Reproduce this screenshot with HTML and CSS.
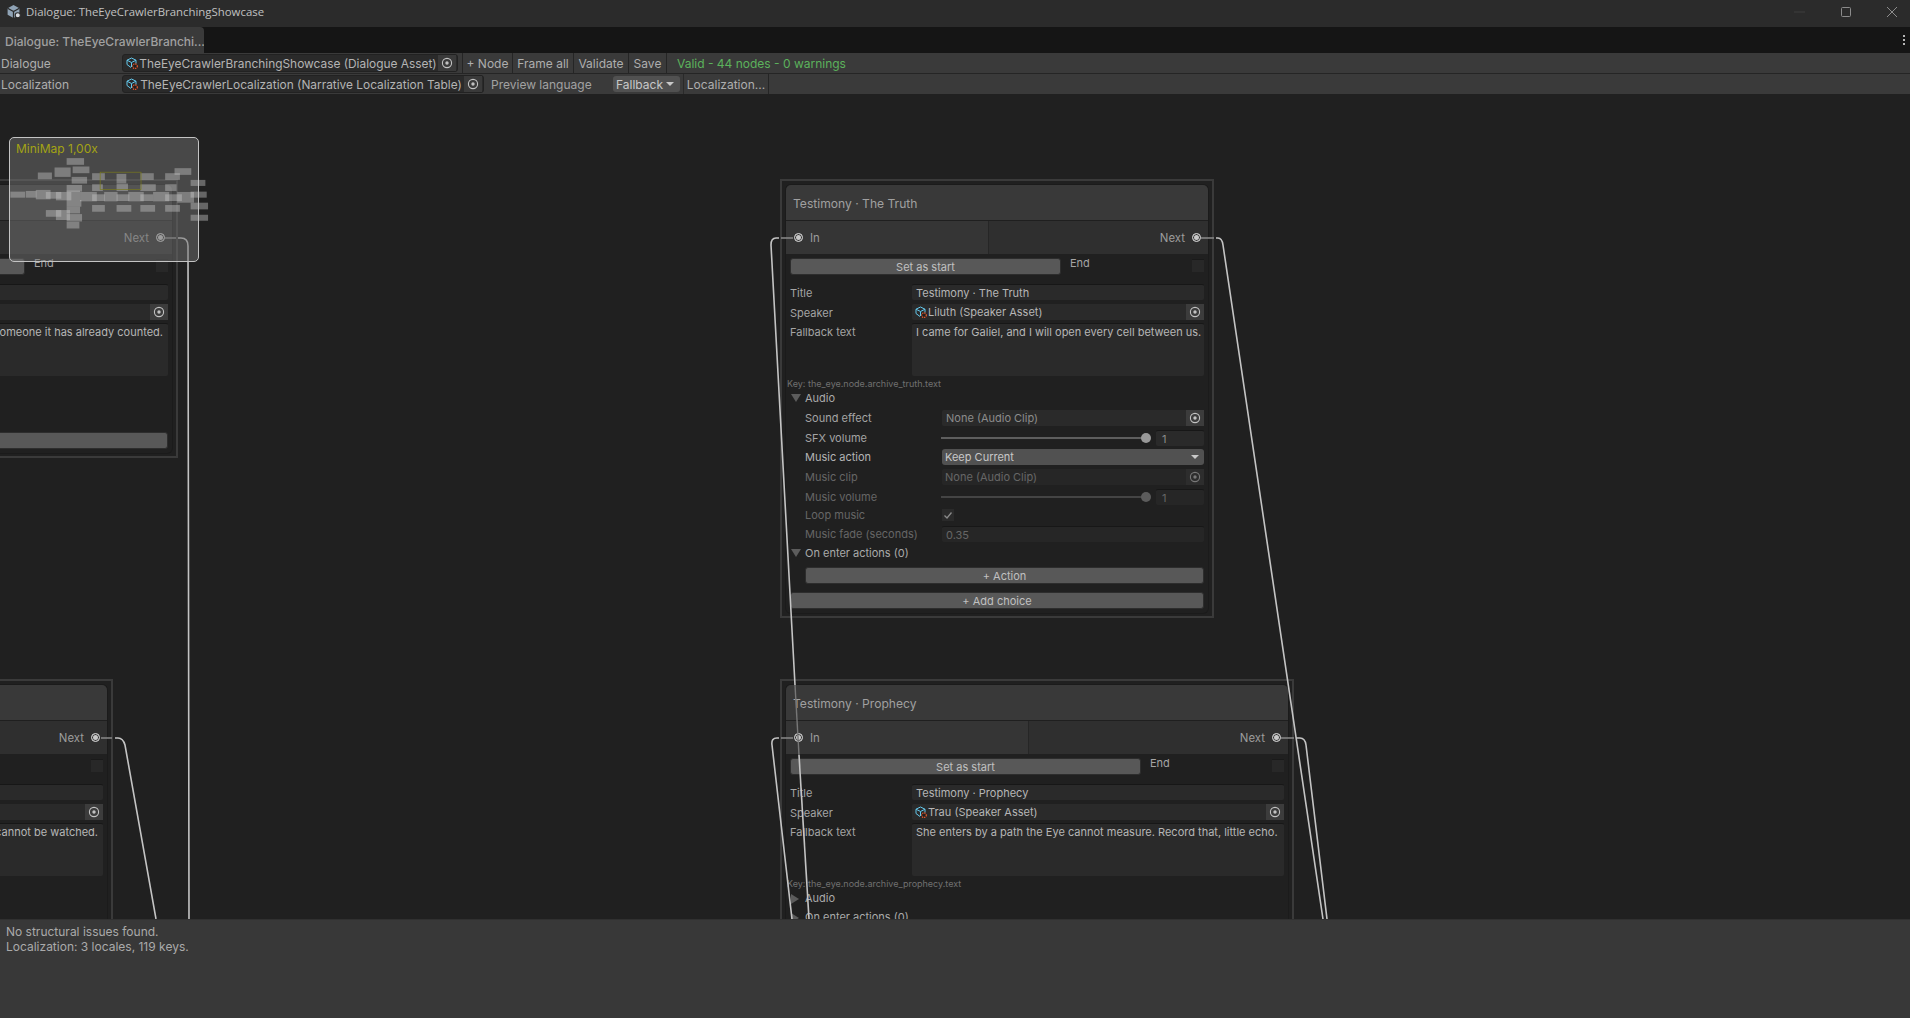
FILE: index.html
```html
<!DOCTYPE html>
<html lang="en">
<head>
    <meta charset="UTF-8">
    <title>Dialogue: TheEyeCrawlerBranchingShowcase</title>
    <link rel="stylesheet" href="styles.css">
</head>
<body>
    <svg width="0" height="0" class="defs">
        <symbol id="asset" viewBox="0 0 12 12">
            <path d="M5.5 1 L10 3.2 V6.5 M5.5 1 L1 3.2 V7.5 L5 10.5 M1 3.2 L5.5 5.5 L10 3.2 M5.5 5.5 V10" fill="none" stroke="#63c8ec" stroke-width="1"/>
            <circle cx="9" cy="9.2" r="2.3" fill="#202020" stroke="#f05a2c" stroke-width="1.2" stroke-dasharray="1.2 0.8"/>
        </symbol>
        <symbol id="target" viewBox="0 0 12 12">
            <circle cx="6" cy="6" r="4.6" fill="none" stroke="#c2c2c2" stroke-width="1.1"/>
            <circle cx="6" cy="6" r="1.7" fill="#c2c2c2"/>
        </symbol>
    </svg>

    <header class="titlebar">
        <svg class="app-icon" viewBox="0 0 14 14">
            <path d="M7 1 L12.5 4 V10 L7 13 L1.5 10 V4 Z" fill="#8fa3b5"/>
            <path d="M1.5 4 L7 7 L12.5 4 M7 7 V13" fill="none" stroke="#2b2b2b" stroke-width="1.2"/>
            <circle cx="11" cy="10.5" r="2.4" fill="#d9dde2" stroke="#2b2b2b"/>
        </svg>
        <span class="titlebar-text">Dialogue: TheEyeCrawlerBranchingShowcase</span>
        <div class="window-buttons">
            <svg class="win-btn" viewBox="0 0 12 12"><path d="M0 6 H11" stroke="#3f3f3f" fill="none"/></svg>
            <svg class="win-btn" viewBox="0 0 12 12"><rect x="1.5" y="1.5" width="9" height="9" rx="1" stroke="#8c8c8c" fill="none"/></svg>
            <svg class="win-btn" viewBox="0 0 12 12"><path d="M1 1 L11 11 M11 1 L1 11" stroke="#8c8c8c" fill="none"/></svg>
        </div>
    </header>

    <div class="tabstrip">
        <div class="tab">Dialogue: TheEyeCrawlerBranchi...</div>
        <div class="tab-menu"><i></i><i></i><i></i></div>
    </div>

    <div class="toolbar">
        <div class="tool-label">Dialogue</div>
        <div class="object-field object-dialogue">
            <svg class="asset-icon"><use href="#asset"/></svg>
            <span class="object-name">TheEyeCrawlerBranchingShowcase (Dialogue Asset)</span>
            <svg class="target-icon"><use href="#target"/></svg>
        </div>
        <button class="tool-btn btn-node">+ Node</button>
        <button class="tool-btn btn-frame">Frame all</button>
        <button class="tool-btn btn-validate">Validate</button>
        <button class="tool-btn btn-save">Save</button>
        <span class="status">Valid - 44 nodes - 0 warnings</span>
    </div>
    <div class="toolbar toolbar-second">
        <div class="tool-label">Localization</div>
        <div class="object-field object-loc">
            <svg class="asset-icon"><use href="#asset"/></svg>
            <span class="object-name">TheEyeCrawlerLocalization (Narrative Localization Table)</span>
            <svg class="target-icon"><use href="#target"/></svg>
        </div>
        <span class="preview-label">Preview language</span>
        <div class="lang-select">Fallback<i class="caret"></i></div>
        <button class="tool-btn btn-loc">Localization...</button>
    </div>

    <main class="canvas">
        <!-- upper left node, cut off by the window -->
        <section class="frame frame-upper-left">
            <div class="node">
                <div class="node-title"></div>
                <div class="ports">
                    <div class="port-in"></div>
                    <div class="port-out"><span>Next</span><i class="port"></i></div>
                </div>
                <div class="node-body">
                    <div class="start-row">
                        <button class="btn btn-start"></button>
                        <div class="end-box"><span>End</span><i class="check"></i></div>
                    </div>
                    <div class="row row-title"><label></label><div class="field"></div></div>
                    <div class="row"><label></label><div class="field field-object"><span class="grow"></span><span class="target-box"><svg class="target-icon"><use href="#target"/></svg></span></div></div>
                    <div class="row row-text"><label></label><div class="field textarea textarea-right">It will not mourn someone it has already counted.</div></div>
                    <div class="key-row"></div>
                    <div class="fold"></div>
                    <div class="fold fold-next"></div>
                    <button class="btn add-choice"></button>
                </div>
            </div>
        </section>

        <!-- Testimony - The Truth -->
        <section class="frame frame-truth">
            <div class="node">
                <div class="node-title">Testimony · The Truth</div>
                <div class="ports">
                    <div class="port-in port-in-truth"><i class="port"></i><span>In</span></div>
                    <div class="port-out"><span>Next</span><i class="port"></i></div>
                </div>
                <div class="node-body">
                    <div class="start-row">
                        <button class="btn btn-start">Set as start</button>
                        <div class="end-box"><span>End</span><i class="check"></i></div>
                    </div>
                    <div class="row row-title"><label>Title</label><div class="field">Testimony · The Truth</div></div>
                    <div class="row"><label>Speaker</label><div class="field field-object"><svg class="asset-icon"><use href="#asset"/></svg><span class="grow">Liluth (Speaker Asset)</span><span class="target-box"><svg class="target-icon"><use href="#target"/></svg></span></div></div>
                    <div class="row row-text"><label>Fallback text</label><div class="field textarea">I came for Galiel, and I will open every cell between us.</div></div>
                    <div class="key-row">Key: the_eye.node.archive_truth.text</div>
                    <div class="fold"><i class="tri-open"></i>Audio</div>
                    <div class="sub-row sub-sound"><label>Sound effect</label><div class="field field-object field-none"><span class="grow">None (Audio Clip)</span><span class="target-box"><svg class="target-icon"><use href="#target"/></svg></span></div></div>
                    <div class="sub-row"><label>SFX volume</label><div class="slider"><i class="thumb"></i></div><div class="field num field-none">1</div></div>
                    <div class="sub-row sub-action"><label class="bright">Music action</label><div class="dropdown">Keep Current<i class="caret"></i></div></div>
                    <div class="sub-row muted sub-clip"><label>Music clip</label><div class="field field-object"><span class="grow">None (Audio Clip)</span><span class="target-box"><svg class="target-icon"><use href="#target"/></svg></span></div></div>
                    <div class="sub-row muted sub-clip"><label>Music volume</label><div class="slider"><i class="thumb"></i></div><div class="field num">1</div></div>
                    <div class="sub-row muted sub-loop"><label>Loop music</label><div class="tick"><svg viewBox="0 0 12 12"><path d="M2.5 6.5 L5 9 L9.5 3.5" fill="none" stroke="#8a8a8a" stroke-width="1.3"/></svg></div></div>
                    <div class="sub-row muted sub-fade"><label>Music fade (seconds)</label><div class="field">0.35</div></div>
                    <div class="fold fold-actions"><i class="tri-open"></i>On enter actions (0)</div>
                    <button class="btn btn-action">+ Action</button>
                    <button class="btn add-choice">+ Add choice</button>
                </div>
            </div>
        </section>

        <!-- lower left node, cut off by the window -->
        <section class="frame frame-lower-left">
            <div class="node">
                <div class="node-title"></div>
                <div class="ports">
                    <div class="port-in"></div>
                    <div class="port-out"><span>Next</span><i class="port"></i></div>
                </div>
                <div class="node-body">
                    <div class="start-row">
                        <button class="btn btn-start"></button>
                        <div class="end-box"><span></span><i class="check"></i></div>
                    </div>
                    <div class="row row-title"><label></label><div class="field"></div></div>
                    <div class="row"><label></label><div class="field field-object"><span class="grow"></span><span class="target-box"><svg class="target-icon"><use href="#target"/></svg></span></div></div>
                    <div class="row row-text"><label></label><div class="field textarea textarea-right">Some rooms cannot be watched.</div></div>
                    <div class="key-row"></div>
                    <div class="fold"></div>
                    <div class="fold fold-next"></div>
                    <button class="btn add-choice"></button>
                </div>
            </div>
        </section>

        <!-- Testimony - Prophecy -->
        <section class="frame frame-prophecy">
            <div class="node">
                <div class="node-title">Testimony · Prophecy</div>
                <div class="ports">
                    <div class="port-in port-in-prophecy"><i class="port"></i><span>In</span></div>
                    <div class="port-out"><span>Next</span><i class="port"></i></div>
                </div>
                <div class="node-body">
                    <div class="start-row">
                        <button class="btn btn-start">Set as start</button>
                        <div class="end-box"><span>End</span><i class="check"></i></div>
                    </div>
                    <div class="row row-title"><label>Title</label><div class="field">Testimony · Prophecy</div></div>
                    <div class="row"><label>Speaker</label><div class="field field-object"><svg class="asset-icon"><use href="#asset"/></svg><span class="grow">Trau (Speaker Asset)</span><span class="target-box"><svg class="target-icon"><use href="#target"/></svg></span></div></div>
                    <div class="row row-text"><label>Fallback text</label><div class="field textarea">She enters by a path the Eye cannot measure. Record that, little echo.</div></div>
                    <div class="key-row">Key: the_eye.node.archive_prophecy.text</div>
                    <div class="fold"><i class="tri-closed"></i>Audio</div>
                    <div class="fold fold-next"><i class="tri-closed"></i>On enter actions (0)</div>
                </div>
            </div>
        </section>

        <svg class="wires" viewBox="0 94 1910 825">
            <g class="wire-stub">
                <path d="M165 238 H176"/>
                <path d="M101 738 H112"/>
                <path d="M793 238 H781"/>
                <path d="M793 738 H781"/>
                <path d="M1201 238 H1214"/>
                <path d="M1281 738 H1294"/>
            </g>
            <g class="wire">
                <path d="M178 238 H181 Q188 238 188 246 L189 919"/>
                <path d="M115 738 H118 Q123 738 125 745 L156 919"/>
                <path d="M779 238 H776 Q771 238 771 245 L795 685"/>
                <path d="M799 755 L809 919"/>
                <path d="M779 738 H777 Q771 738 772 745 L792 919"/>
                <path d="M1216 238 H1218 Q1222 238 1223 245 L1323 919"/>
                <path d="M1296 738 H1300 Q1305 738 1306 745 L1327 919"/>
            </g>
            <path class="wire-dim" d="M795 685 L799 755"/>
        </svg>

        <aside class="minimap">
            <span class="minimap-title">MiniMap 1,00x</span>
            <svg class="minimap-map" viewBox="28 22 567 373">
                <g class="mini-nodes">
                    <rect x="200" y="85" width="52" height="20"/><rect x="218" y="110" width="50" height="20"/>
                    <rect x="164" y="113" width="48" height="28"/><rect x="114" y="128" width="42" height="20"/>
                    <rect x="215" y="141" width="46" height="20"/><rect x="276" y="130" width="38" height="20"/>
                    <rect x="349" y="132" width="29" height="28"/><rect x="420" y="130" width="40" height="20"/>
                    <rect x="494" y="130" width="44" height="20"/><rect x="522" y="115" width="50" height="20"/>
                    <rect x="570" y="150" width="44" height="18"/><rect x="276" y="163" width="32" height="20"/>
                    <rect x="349" y="161" width="34" height="22"/><rect x="420" y="163" width="46" height="20"/>
                    <rect x="494" y="163" width="34" height="20"/><rect x="200" y="165" width="46" height="20"/>
                    <rect x="32" y="185" width="44" height="18"/><rect x="78" y="183" width="32" height="20"/>
                    <rect x="108" y="180" width="44" height="28"/><rect x="138" y="186" width="46" height="20"/>
                    <rect x="168" y="186" width="46" height="25"/><rect x="200" y="182" width="40" height="28"/>
                    <rect x="240" y="186" width="50" height="28"/><rect x="276" y="193" width="38" height="20"/>
                    <rect x="312" y="186" width="40" height="28"/><rect x="349" y="193" width="38" height="20"/>
                    <rect x="384" y="186" width="46" height="28"/><rect x="420" y="193" width="38" height="20"/>
                    <rect x="458" y="186" width="48" height="28"/><rect x="494" y="193" width="50" height="20"/>
                    <rect x="530" y="186" width="50" height="32"/><rect x="570" y="185" width="48" height="18"/>
                    <rect x="200" y="210" width="44" height="20"/><rect x="200" y="230" width="40" height="20"/>
                    <rect x="138" y="240" width="46" height="20"/><rect x="168" y="240" width="42" height="30"/>
                    <rect x="200" y="252" width="46" height="22"/><rect x="200" y="275" width="38" height="20"/>
                    <rect x="276" y="225" width="38" height="20"/><rect x="349" y="225" width="44" height="20"/>
                    <rect x="420" y="225" width="44" height="20"/><rect x="494" y="225" width="44" height="20"/>
                    <rect x="570" y="218" width="52" height="20"/><rect x="570" y="254" width="52" height="18"/>
                </g>
                <rect class="mini-view" x="300" y="127" width="122" height="52"/>
            </svg>
        </aside>
    </main>

    <footer class="console">
        <div>No structural issues found.</div>
        <div>Localization: 3 locales, 119 keys.</div>
    </footer>
</body>
</html>
```

FILE: styles.css
```css
* {
    box-sizing: border-box;
}
html, body {
    height: 100%;
}
body {
    margin: 0;
    display: flex;
    flex-direction: column;
    height: 1018px;
    overflow: hidden;
    background: #202020;
    color: #c4c4c4;
    font-family: Inter, "Liberation Sans", sans-serif;
    font-size: 12px;
}
button {
    font: inherit;
    color: inherit;
    border: 0;
    padding: 0;
    background: none;
}
.defs {
    position: absolute;
}

/* window chrome */
.titlebar {
    height: 27px;
    flex: none;
    display: flex;
    align-items: center;
    padding: 0 0 4px 6px;
    background: #2b2b2b;
}
.app-icon {
    width: 15px;
    height: 15px;
}
.titlebar-text {
    margin-left: 5px;
    font-family: "Open Sans", sans-serif;
    font-size: 11.4px;
    color: #c0c0c0;
}
.window-buttons {
    margin-left: auto;
    display: flex;
    gap: 34px;
    padding-right: 12px;
}
.win-btn {
    width: 12px;
    height: 12px;
}
.tabstrip {
    height: 26px;
    flex: none;
    display: flex;
    justify-content: space-between;
    background: #151515;
}
.tab {
    width: 204px;
    padding: 7px 0 0 5px;
    background: #3a3a3a;
    border-radius: 0 4px 0 0;
    font-weight: 500;
    color: #a0a0a0;
    white-space: nowrap;
    overflow: hidden;
}
.tab-menu {
    display: flex;
    flex-direction: column;
    gap: 2px;
    padding: 8px 5px 0 0;
}
.tab-menu i {
    width: 2px;
    height: 2px;
    background: #b5b5b5;
}

/* toolbars */
.toolbar {
    height: 21px;
    flex: none;
    display: flex;
    align-items: center;
    background: #3a3a3a;
    border-bottom: 1px solid #252525;
}
.toolbar-second {
    height: 20px;
    border-bottom: 0;
}
.tool-label {
    width: 122px;
    padding-left: 1px;
    color: #aeaeae;
}
.object-field {
    height: 18px;
    display: flex;
    align-items: center;
    justify-content: space-between;
    padding-left: 3px;
    background: #2a2a2a;
    border: 1px solid #222;
    border-radius: 3px;
}
.object-dialogue {
    width: 336px;
}
.object-loc {
    width: 362px;
}
.asset-icon {
    width: 12px;
    height: 12px;
    flex: none;
}
.object-name {
    white-space: nowrap;
    color: #b4b4b4;
    font-size: 11.9px;
}
.target-icon {
    width: 12px;
    height: 12px;
    flex: none;
}
.object-field .target-icon {
    box-sizing: content-box;
    padding: 2px 3px;
    background: #3a3a3a;
    margin-right: 1px;
}
.tool-btn {
    height: 20px;
    color: #aeaeae;
    border-right: 1px solid #252525;
    text-align: center;
}
.btn-node {
    margin-left: 4px;
    width: 51px;
    border-left: 1px solid #252525;
}
.btn-frame {
    width: 61px;
}
.btn-validate {
    width: 55px;
}
.btn-save {
    width: 38px;
}
.status {
    margin-left: 10px;
    color: #5cb25c;
}
.preview-label {
    margin-left: 7px;
    width: 122px;
    color: #a2a2a2;
}
.lang-select {
    width: 67px;
    height: 16px;
    padding-left: 3px;
    display: flex;
    align-items: center;
    gap: 3px;
    background: #515151;
    border-radius: 3px;
    color: #c8c8c8;
}
.caret {
    width: 0;
    height: 0;
    border-left: 4px solid transparent;
    border-right: 4px solid transparent;
    border-top: 4px solid #c8c8c8;
}
.btn-loc {
    margin-left: 3px;
    width: 86px;
    border-left: 1px solid #2a2a2a;
}

/* graph */
.canvas {
    position: relative;
    flex: 1;
    overflow: hidden;
    background: #202020;
}
.frame {
    position: absolute;
    border: 2px solid #3a3a3a;
    padding: 4px 4px 3px;
    font-size: 11px;
}
.frame-truth {
    left: 780px;
    top: 85px;
    width: 434px;
}
.frame-prophecy {
    left: 780px;
    top: 585px;
    width: 514px;
}
.frame-upper-left {
    left: -336px;
    top: 85px;
    width: 514px;
}
.frame-lower-left {
    left: -401px;
    top: 585px;
    width: 514px;
}
.node {
    background: #202020;
    border-radius: 5px;
    box-shadow: 0 0 0 1px #1b1b1b;
}
.node-title {
    height: 36px;
    padding: 11px 0 0 7px;
    background: #393939;
    border-radius: 5px 5px 0 0;
    font-size: 12.1px;
    color: #a0a0a0;
    border-bottom: 1px solid #1f1f1f;
}
.ports {
    height: 33px;
    display: flex;
    color: #9c9c9c;
    font-size: 11.4px;
}
.port-in {
    display: flex;
    align-items: center;
    gap: 7px;
    padding-left: 8px;
    width: 50%;
    background: #353535;
    border-right: 1px solid #262626;
}
.port-in-truth {
    width: 203px;
}
.port-in-prophecy {
    width: 243px;
}
.port-out {
    flex: 1;
    display: flex;
    align-items: center;
    justify-content: flex-end;
    gap: 7px;
    padding-right: 7px;
    background: #2f2f2f;
}
.port {
    width: 9px;
    height: 9px;
    border-radius: 50%;
    border: 1px solid #c8c8c8;
    background: #c8c8c8;
    box-shadow: inset 0 0 0 1px #353535;
}
.node-body {
    padding: 4px;
}
.start-row {
    display: flex;
    height: 17px;
}
.btn {
    height: 17px;
    background: #585858;
    border: 1px solid #2d2d2d;
    border-radius: 3px;
    color: #c0c0c0;
    text-align: center;
    line-height: 16px;
}
.btn-start {
    flex: 1;
}
.end-box {
    width: 143px;
    padding-left: 9px;
    display: flex;
    justify-content: space-between;
    color: #a4a4a4;
}
.end-box span {
    margin-top: -2px;
}
.check {
    width: 12px;
    height: 13px;
    margin-top: 1px;
    background: #282828;
    border-top: 1px solid #1a1a1a;
}
.row {
    display: flex;
    margin-top: 4px;
    height: 16px;
}
.row-title {
    margin-top: 9px;
}
.row-text {
    margin-top: 3px;
    height: 53px;
}
.row label {
    width: 122px;
    flex: none;
    color: #a4a4a4;
    line-height: 18px;
}
.field {
    flex: 1;
    min-width: 0;
    height: 16px;
    padding-left: 4px;
    line-height: 16px;
    background: #2a2a2a;
    border-top: 1px solid #171717;
    border-radius: 2px;
    white-space: nowrap;
    color: #b6b6b6;
}
.field-object {
    display: flex;
    align-items: center;
    padding-left: 3px;
    border-top: 0;
}
.field-object .asset-icon {
    margin-right: 1px;
}
.grow {
    flex: 1;
}
.target-box {
    width: 18px;
    height: 16px;
    display: flex;
    align-items: center;
    justify-content: center;
    background: #3c3c3c;
}
.textarea {
    height: 53px;
    overflow: hidden;
}
.textarea-right {
    text-align: right;
    padding-right: 5px;
}
.key-row {
    height: 14px;
    margin-left: -3px;
    font-size: 9px;
    line-height: 15px;
    color: #707070;
}
.fold {
    display: flex;
    align-items: center;
    height: 14px;
    margin-top: 1px;
    padding-left: 15px;
    position: relative;
    color: #aaaaaa;
}
.fold-next {
    margin-top: 5px;
}
.fold-actions {
    margin-top: 4px;
}
.tri-open, .tri-closed {
    position: absolute;
    left: 1px;
    top: 3px;
    width: 0;
    height: 0;
}
.tri-open {
    border-left: 5px solid transparent;
    border-right: 5px solid transparent;
    border-top: 8px solid #5c5c5c;
}
.tri-closed {
    border-top: 5px solid transparent;
    border-bottom: 5px solid transparent;
    border-left: 8px solid #5c5c5c;
}
.sub-row {
    display: flex;
    align-items: center;
    height: 16px;
    margin-top: 4px;
    margin-left: 15px;
}
.sub-row label {
    width: 137px;
    flex: none;
    color: #a4a4a4;
}
.sub-row label.bright {
    color: #b4b4b4;
}
.sub-sound {
    margin-top: 5px;
}
.sub-action {
    margin-top: 3px;
}
.sub-loop {
    margin-top: 2px;
}
.sub-fade {
    margin-top: 3px;
}
.field-none {
    color: #8c8c8c;
    padding-left: 4px;
}
.slider {
    flex: 1;
    height: 2px;
    margin: 0 6px 0 -1px;
    position: relative;
    background: #5e5e5e;
}
.thumb {
    position: absolute;
    right: -1px;
    top: -4px;
    width: 10px;
    height: 10px;
    border-radius: 50%;
    background: #999;
}
.num {
    flex: none;
    width: 48px;
    padding-left: 6px;
}
.dropdown {
    flex: 1;
    height: 16px;
    padding: 0 5px 0 3px;
    display: flex;
    align-items: center;
    justify-content: space-between;
    background: #515151;
    border-radius: 3px;
    color: #c8c8c8;
}
.muted label, .muted .field, .muted .num {
    color: #666;
}
.muted .field {
    background: #262626;
}
.muted .target-box {
    background: #2d2d2d;
}
.muted .target-icon {
    opacity: 0.5;
}
.muted .slider {
    background: #444;
}
.muted .thumb {
    background: #5c5c5c;
}
.tick {
    width: 12px;
    height: 12px;
    background: #2a2a2a;
}
.tick svg {
    display: block;
}
.btn-action {
    display: block;
    width: calc(100% - 15px);
    margin: 7px 0 2px 15px;
}
.add-choice {
    display: block;
    width: 100%;
    margin-top: 8px;
}

/* edges */
.wires {
    position: absolute;
    left: 0;
    top: 0;
    width: 1910px;
    height: 825px;
    fill: none;
    pointer-events: none;
}
.wire {
    stroke: #c4c4c4;
    stroke-width: 1.6;
}
.wire-stub {
    stroke: #858585;
    stroke-width: 1.6;
}
.wire-dim {
    stroke: #777;
    stroke-width: 1.4;
}

/* minimap */
.minimap {
    position: absolute;
    left: 9px;
    top: 43px;
    width: 190px;
    height: 125px;
    background: rgba(112, 112, 112, 0.5);
    border: 1px solid #c4c4c4;
    border-radius: 5px;
}
.minimap-title {
    position: absolute;
    left: 6px;
    top: 3px;
    color: #a3a314;
}
.minimap-map {
    position: absolute;
    left: -1px;
    top: -1px;
    width: 190px;
    height: 125px;
    overflow: visible;
}
.mini-nodes rect {
    fill: rgba(200, 200, 200, 0.42);
}
.mini-view {
    fill: none;
    stroke: #7a7a1a;
    stroke-width: 2;
}

/* bottom console */
.console {
    height: 99px;
    flex: none;
    position: relative;
    padding: 4px 0 0 6px;
    background: #383838;
    border-top: 1px solid #303030;
    line-height: 15px;
    color: #aaaaaa;
}
```
